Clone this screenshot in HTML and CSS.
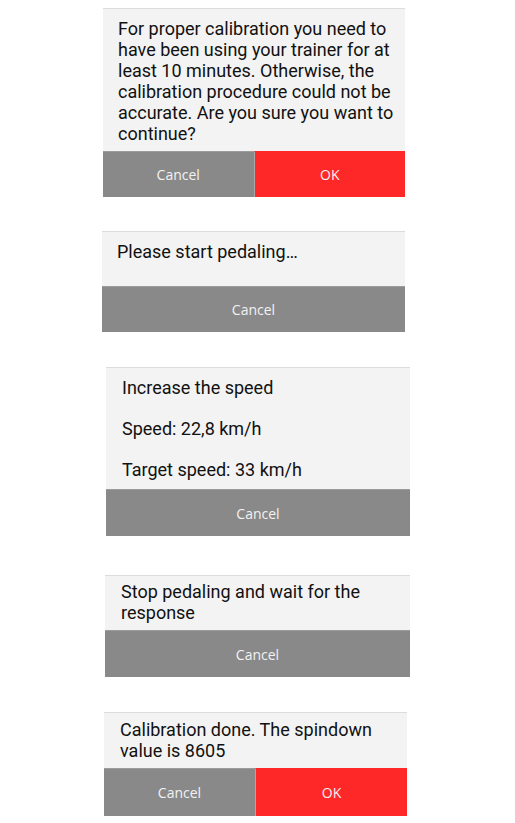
FILE: index.html
```html
<!DOCTYPE html>
<html>
<head>
<meta charset="utf-8">
<link rel="stylesheet" href="styles.css">
</head>
<body>
<div class="stack">
  <section class="dialog d1">
    <div class="msg">For proper calibration you need to have been using your trainer for at least 10 minutes. Otherwise, the calibration procedure could not be accurate. Are you sure you want to continue?</div>
    <div class="actions">
      <button class="btn cancel">Cancel</button>
      <button class="btn ok">OK</button>
    </div>
  </section>

  <section class="dialog d2">
    <div class="msg">Please start pedaling…</div>
    <div class="actions">
      <button class="btn cancel full">Cancel</button>
    </div>
  </section>

  <section class="dialog d3">
    <div class="msg">
      <p>Increase the speed</p>
      <p>Speed: 22,8 km/h</p>
      <p>Target speed: 33 km/h</p>
    </div>
    <div class="actions">
      <button class="btn cancel full">Cancel</button>
    </div>
  </section>

  <section class="dialog d4">
    <div class="msg">Stop pedaling and wait for the response</div>
    <div class="actions">
      <button class="btn cancel full">Cancel</button>
    </div>
  </section>

  <section class="dialog d5">
    <div class="msg">Calibration done. The spindown value is 8605</div>
    <div class="actions">
      <button class="btn cancel">Cancel</button>
      <button class="btn ok">OK</button>
    </div>
  </section>
</div>
</body>
</html>
```

FILE: styles.css
```css
html, body {
  margin: 0;
  padding: 0;
  background: #ffffff;
}

.stack {
  display: flex;
  flex-direction: column;
  align-items: flex-start;
  padding-top: 8px;
}

.dialog {
  display: flex;
  flex-direction: column;
  background: #f3f3f3;
  border-top: 1px solid #dcdcdc;
}

.msg {
  font-family: Roboto, "Liberation Sans", sans-serif;
  font-size: 18px;
  line-height: 21px;
  color: #111111;
  padding: 0 4px 0 15px;
}

.msg p {
  margin: 0;
}

.msg p + p {
  margin-top: 20px;
}

.actions {
  display: flex;
}

.btn {
  flex: 1 1 0;
  border: 0;
  border-top: 1px solid #9c9c9c;
  margin: 0;
  padding: 0;
  font-family: "Open Sans", "Noto Sans", sans-serif;
  font-size: 14px;
  color: #f2f2f2;
  cursor: pointer;
}

.btn.cancel {
  background: #898989;
}

.btn.ok {
  background: #fe2828;
  border-top-color: #fe2828;
  border-left: 1px solid #a8a8a8;
}

/* individual dialogs */
.d1 {
  margin-left: 103px;
  width: 302px;
}
.d1 .msg {
  padding-top: 9px;
  padding-bottom: 7px;
}
.d1 .btn {
  height: 46px;
}

.d2 {
  margin-left: 102px;
  margin-top: 34px;
  width: 303px;
}
.d2 .msg {
  padding-top: 9px;
  padding-bottom: 24px;
}
.d2 .btn {
  height: 46px;
}

.d3 {
  margin-left: 106px;
  margin-top: 35px;
  width: 304px;
}
.d3 .msg {
  padding-top: 9px;
  padding-bottom: 9px;
  padding-left: 16px;
}
.d3 .btn {
  height: 47px;
}

.d4 {
  margin-left: 105px;
  margin-top: 39px;
  width: 305px;
}
.d4 .msg {
  padding-top: 5px;
  padding-bottom: 7px;
  padding-left: 16px;
}
.d4 .btn {
  height: 47px;
}

.d5 {
  margin-left: 104px;
  margin-top: 35px;
  width: 303px;
}
.d5 .msg {
  padding-top: 6px;
  padding-bottom: 7px;
  padding-left: 16px;
}
.d5 .btn {
  height: 48px;
}
```
